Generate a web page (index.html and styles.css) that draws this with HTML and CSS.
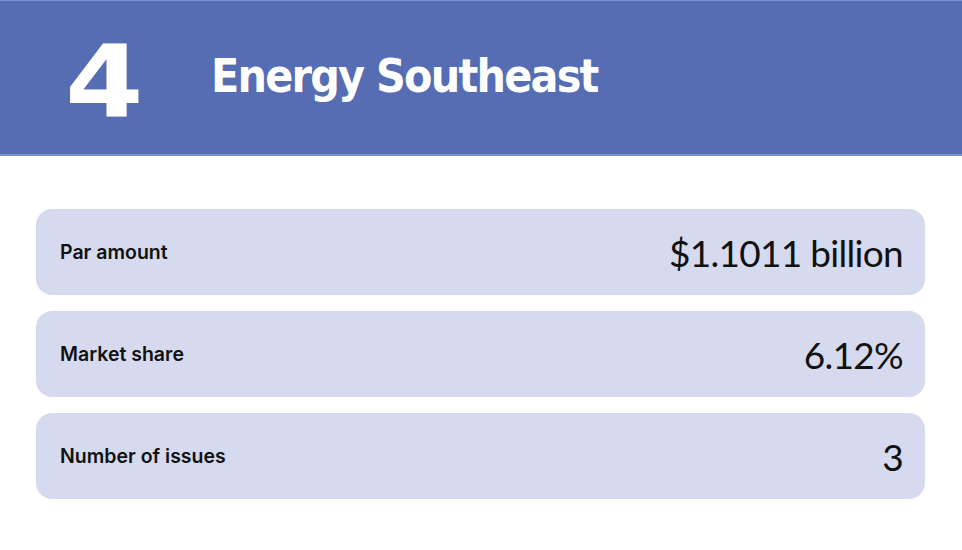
FILE: index.html
```html
<!DOCTYPE html>
<html lang="en">
<head>
    <meta charset="UTF-8">
    <meta name="viewport" content="width=device-width, initial-scale=1.0">
    <title>Energy Southeast</title>
    <link rel="stylesheet" href="styles.css">
</head>
<body>

<div class="header">
    <div class="rank">4</div>
    <h1 class="name">Energy Southeast</h1>
</div>

<div class="stats">
    <div class="stat">
        <span class="label">Par amount</span>
        <span class="value">$1.1011 billion</span>
    </div>
    <div class="stat">
        <span class="label">Market share</span>
        <span class="value">6.12%</span>
    </div>
    <div class="stat">
        <span class="label">Number of issues</span>
        <span class="value">3</span>
    </div>
</div>

</body>
</html>
```

FILE: styles.css
```css
body {
    margin: 0;
    font-family: Lato, sans-serif;
    background-color: #fff;
}
.header {
    height: 153px;
    background-color: #566db3;
    border-top: 1px solid #7b90d2;
    border-bottom: 2px solid #7b90d2;
    display: flex;
    align-items: center;
    color: #fff;
}
.rank {
    font-family: "DejaVu Sans", sans-serif;
    font-weight: bold;
    font-size: 99px;
    line-height: 1;
    margin-left: 65px;
    width: 146px;
    margin-top: 8px;
    transform: scaleX(1.14);
    transform-origin: left center;
}
.name {
    font-family: "DejaVu Sans Condensed", sans-serif;
    font-weight: bold;
    font-size: 46px;
    letter-spacing: -1.75px;
    margin: 0;
    margin-top: -4px;
}
.stats {
    padding: 53px 37px 0 36px;
    display: flex;
    flex-direction: column;
    gap: 16px;
}
.stat {
    height: 86px;
    background-color: #d6daee;
    border-radius: 16px;
    display: flex;
    align-items: center;
    justify-content: space-between;
    padding: 0 22px 0 24px;
    color: #111;
}
.label {
    font-family: Inter, sans-serif;
    font-size: 19.5px;
    font-weight: 600;
}
.value {
    font-size: 37px;
    letter-spacing: -0.7px;
}
```
